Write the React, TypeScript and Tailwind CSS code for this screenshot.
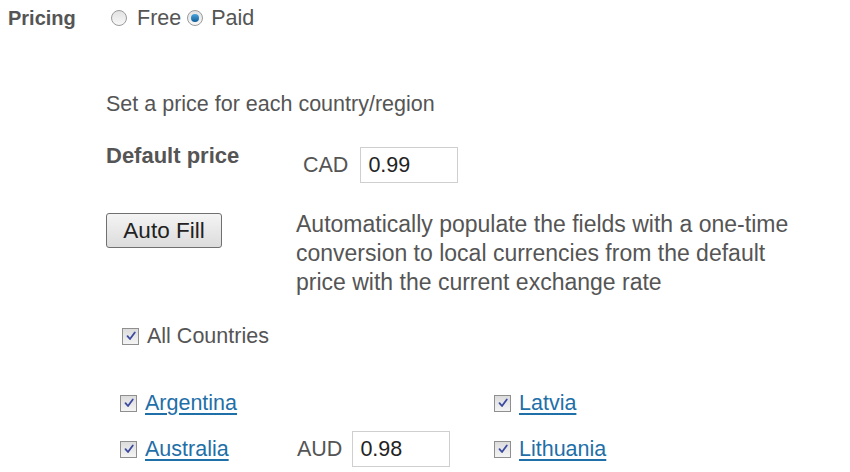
import React from 'react';

function Radio({ checked }: { checked?: boolean }) {
  return (
    <span className="inline-flex w-[16px] h-[16px] rounded-full border border-[#9a9a9a] bg-gradient-to-b from-[#e2e2e2] to-[#f8f8f8] items-center justify-center">
      {checked && <span className="w-[8px] h-[8px] rounded-full bg-gradient-to-b from-[#4aa4dc] to-[#0d5f98]" />}
    </span>
  );
}

function Check() {
  return (
    <span className="inline-flex w-[17px] h-[17px] border border-[#8f8f8f] bg-gradient-to-b from-[#dcdcdc] to-[#f4f4f4] items-center justify-center shrink-0">
      <svg viewBox="0 0 12 12" className="w-[12px] h-[12px]">
        <path d="M2.5 6.2 L5 9 L9.8 2.5" fill="none" stroke="#3b4aa0" strokeWidth="1.8" strokeLinecap="round" strokeLinejoin="round" />
      </svg>
    </span>
  );
}

function PriceBox({ cur, value, gap }: { cur: string; value: string; gap: string }) {
  return (
    <div className="flex items-center">
      <span>{cur}</span>
      <div className={`${gap} w-[98px] h-[36px] border border-[#cfcfcf] flex items-center pl-[7px] text-[#222]`}>{value}</div>
    </div>
  );
}

function Country({ name }: { name: string }) {
  return (
    <label className="flex items-center gap-[8px]">
      <Check />
      <a href="#" className="text-[#1f6fa8] underline underline-offset-[3px]">{name}</a>
    </label>
  );
}

export default function App() {
  return (
    <div className="w-[850px] h-[472px] bg-white text-[#555] text-[21.5px] leading-[28px] overflow-hidden" style={{ fontFamily: '"Liberation Sans", Arial, sans-serif' }}>
      {/* Pricing row */}
      <div className="flex items-center pl-[8px] pt-[4px]">
        <span className="w-[103px] font-bold text-[20px]">Pricing</span>
        <label className="flex items-center gap-[10px]">
          <Radio />
          <span>Free</span>
        </label>
        <label className="flex items-center gap-[8px] ml-[6px]">
          <Radio checked />
          <span>Paid</span>
        </label>
      </div>

      <div className="pl-[106px] pt-[58px]">
        <p>Set a price for each country/region</p>

        <div className="flex items-start mt-[24px]">
          <span className="w-[197px] font-bold text-[22px]">Default price</span>
          <div className="mt-[5px]">
            <PriceBox cur="CAD" value="0.99" gap="ml-[12px]" />
          </div>
        </div>

        <div className="flex items-start mt-[27px]">
          <button className="w-[116px] h-[35px] mt-[3px] rounded-[3px] border border-[#707070] bg-gradient-to-b from-[#f4f4f4] to-[#dcdcdc] text-[#222] text-[22.5px] shrink-0">
            Auto Fill
          </button>
          <p className="ml-[74px] leading-[29px] text-[23px]">
            Automatically populate the fields with a one-time
            <br />
            conversion to local currencies from the default
            <br />
            price with the current exchange rate
          </p>
        </div>

        <label className="flex items-center gap-[8px] ml-[16px] mt-[25px]">
          <Check />
          <span>All Countries</span>
        </label>

        <div className="grid grid-cols-[374px_1fr] ml-[14px] mt-[35px] gap-y-[10px]">
          <div className="h-[36px] flex items-center"><Country name="Argentina" /></div>
          <div className="h-[36px] flex items-center"><Country name="Latvia" /></div>
          <div className="h-[36px] flex items-center">
            <div className="w-[177px]"><Country name="Australia" /></div>
            <PriceBox cur="AUD" value="0.98" gap="ml-[10px]" />
          </div>
          <div className="h-[36px] flex items-center"><Country name="Lithuania" /></div>
        </div>
      </div>
    </div>
  );
}
